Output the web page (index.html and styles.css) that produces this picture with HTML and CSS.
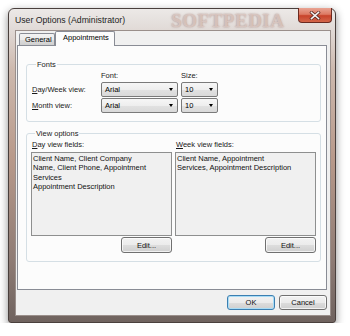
FILE: index.html
```html
<!DOCTYPE html>
<html>
<head>
<meta charset="utf-8">
<link rel="stylesheet" href="styles.css">
</head>
<body>
<div class="window">
  <div class="titlebar">
    <span class="title">User Options (Administrator)</span>
    <span class="wm-title">SOFTPEDIA</span>
    <div class="close">
      <svg width="12" height="9" viewBox="0 0 12 9"><path d="M2.5 1.5 L9.5 7.5 M9.5 1.5 L2.5 7.5" stroke="#5a2a22" stroke-width="3" stroke-linecap="square"/><path d="M2.5 1.5 L9.5 7.5 M9.5 1.5 L2.5 7.5" stroke="#f4f4f4" stroke-width="1.6" stroke-linecap="square"/></svg>
    </div>
  </div>
  <div class="client">
    <div class="tabs">
      <div class="tab">General</div>
      <div class="tab active">Appointments</div>
    </div>
    <div class="panel">
      <div class="group fonts">
        <div class="legend">Fonts</div>
        <div class="fontgrid">
          <span></span><span class="hdr">Font:</span><span class="hdr">Size:</span>
          <span class="lbl"><u>D</u>ay/Week view:</span>
          <div class="combo">Arial<i class="arrow"></i></div>
          <div class="combo">10<i class="arrow"></i></div>
          <span class="lbl"><u>M</u>onth view:</span>
          <div class="combo">Arial<i class="arrow"></i></div>
          <div class="combo">10<i class="arrow"></i></div>
        </div>
      </div>
      <div class="group views">
        <div class="legend">View options</div>
        <div class="viewgrid">
          <div class="col">
            <span class="lbl"><u>D</u>ay view fields:</span>
            <div class="listbox">Client Name, Client Company<br>Name, Client Phone, Appointment<br>Services<br>Appointment Description</div>
            <div class="btn edit">Edit...</div>
          </div>
          <div class="col">
            <span class="lbl"><u>W</u>eek view fields:</span>
            <div class="listbox">Client Name, Appointment<br>Services, Appointment Description</div>
            <div class="btn edit">Edit...</div>
          </div>
        </div>
      </div>
    </div>
    <div class="buttons">
      <div class="btn default">OK</div>
      <div class="btn">Cancel</div>
    </div>
  </div>
</div>
</body>
</html>
```
FILE: styles.css
```css
html, body {
  margin: 0;
  background: #ffffff;
}
body {
  font-family: "Liberation Sans", Arial, sans-serif;
  font-size: 7.5px;
  color: #000;
}
.window {
  margin: 8px 0 0 8px;
  width: 328px;
  height: 315px;
  box-sizing: border-box;
  border: 1px solid #4a403d;
  border-radius: 6px 6px 3px 3px;
  background: linear-gradient(180deg, #ece9e7 0px, #e2dcd9 18px, #cdb9ae 60px, #b8998a 150px, #8f7c75 250px, #6e625e 314px);
  box-shadow: 0 3px 9px rgba(0,0,0,0.45);
  display: flex;
  flex-direction: column;
  padding: 0 4px 6px 6px;
}
.titlebar {
  height: 21px;
  display: flex;
  align-items: flex-start;
  position: relative;
}
.title {
  font-size: 8.7px;
  line-height: 11px;
  padding-top: 6px;
  color: #1e1e1e;
}
.wm-title {
  position: absolute;
  left: 156px;
  top: 1px;
  font-family: "Liberation Serif", serif;
  font-weight: bold;
  font-size: 19px;
  letter-spacing: 0.5px;
  color: rgba(222, 204, 198, 0.8);
  text-shadow: 0 0 2px rgba(120, 70, 60, 0.55);
}
.close {
  margin-left: auto;
  margin-top: -1px;
  margin-right: -1px;
  width: 34px;
  height: 15px;
  box-sizing: border-box;
  border: 1px solid #6b2a20;
  border-top: none;
  border-radius: 0 0 4px 4px;
  background: linear-gradient(180deg, #e9a493 0%, #dd7a63 45%, #c8432a 55%, #d4664a 100%);
  display: flex;
  align-items: center;
  justify-content: center;
  position: relative;
}
.client {
  flex: 1;
  background: #f0f0f0;
  border: 1px solid #9a8f8b;
  display: flex;
  flex-direction: column;
}
.tabs {
  height: 14px;
  display: flex;
  align-items: flex-end;
  padding-left: 3px;
  position: relative;
  z-index: 1;
}
.tab {
  height: 12px;
  box-sizing: border-box;
  border: 1px solid #898c95;
  border-bottom: none;
  border-radius: 2px 2px 0 0;
  background: linear-gradient(180deg, #f3f3f3 0%, #ebebeb 50%, #dddddd 51%, #cfcfcf 100%);
  line-height: 11px;
  padding-left: 5px;
  width: 36px;
}
.tab.active {
  height: 15px;
  margin-bottom: -1px;
  width: 60px;
  padding-left: 7px;
  background: #fcfcfc;
  line-height: 12px;
}
.panel {
  margin: 0 3px 0 1px;
  height: 245px;
  box-sizing: border-box;
  border: 1px solid #898c95;
  background: #fcfcfc;
  padding: 18px 5px 0 8px;
}
.group {
  border: 1px solid #d5dfe5;
  border-radius: 3px;
}
.legend {
  margin: -6px 0 0 4px;
  width: fit-content;
  padding: 0 1px;
  background: #fcfcfc;
  line-height: 11px;
  color: #1a1a1a;
}
.fonts {
  padding: 0 0 8px 5px;
}
.fontgrid {
  margin-top: -1px;
  display: grid;
  grid-template-columns: 66px 77px 37px;
  grid-template-rows: 12px 15px 15px;
  column-gap: 3px;
  row-gap: 1px;
  align-items: center;
}
.hdr, .lbl {
  line-height: 11px;
  color: #1a1a1a;
}
.combo {
  height: 15px;
  box-sizing: border-box;
  border: 1px solid #7a7a7a;
  border-radius: 2px;
  background: linear-gradient(180deg, #f6f6f6 0%, #eeeeee 50%, #e2e2e2 51%, #d9d9d9 100%);
  line-height: 13px;
  padding-left: 3px;
  display: flex;
  align-items: center;
}
.arrow {
  margin-left: auto;
  margin-right: 4px;
  width: 0;
  height: 0;
  border-left: 2.5px solid transparent;
  border-right: 2.5px solid transparent;
  border-top: 3px solid #000;
}
.views {
  margin-top: 11px;
  padding: 0 4px 8px 4px;
}
.viewgrid {
  display: grid;
  grid-template-columns: 1fr 1fr;
  column-gap: 3px;
}
.col {
  display: flex;
  flex-direction: column;
}
.col .lbl {
  padding-left: 1px;
}
.listbox {
  margin-top: 2px;
  height: 84px;
  box-sizing: border-box;
  border: 1px solid #8e8f8f;
  background: #f0f0f0;
  padding: 1px 1px;
  line-height: 9.4px;
  white-space: nowrap;
  overflow: hidden;
  color: #111;
}
.btn {
  height: 15px;
  box-sizing: border-box;
  border: 1px solid #707070;
  border-radius: 3px;
  background: linear-gradient(180deg, #f2f2f2 0%, #ebebeb 50%, #dddddd 51%, #cfcfcf 100%);
  box-shadow: inset 0 0 0 1px rgba(255,255,255,0.7);
  display: flex;
  align-items: center;
  justify-content: center;
  color: #111;
}
.edit {
  margin-top: 1px;
  height: 16px;
  width: 51px;
  align-self: flex-end;
}
.buttons {
  display: flex;
  justify-content: flex-end;
  gap: 4px;
  padding: 5px 3px 0 0;
}
.buttons .btn {
  width: 48px;
}
.btn.default {
  border-color: #3c7fb1;
  box-shadow: inset 0 0 0 1px #a8dcf6;
}
```
